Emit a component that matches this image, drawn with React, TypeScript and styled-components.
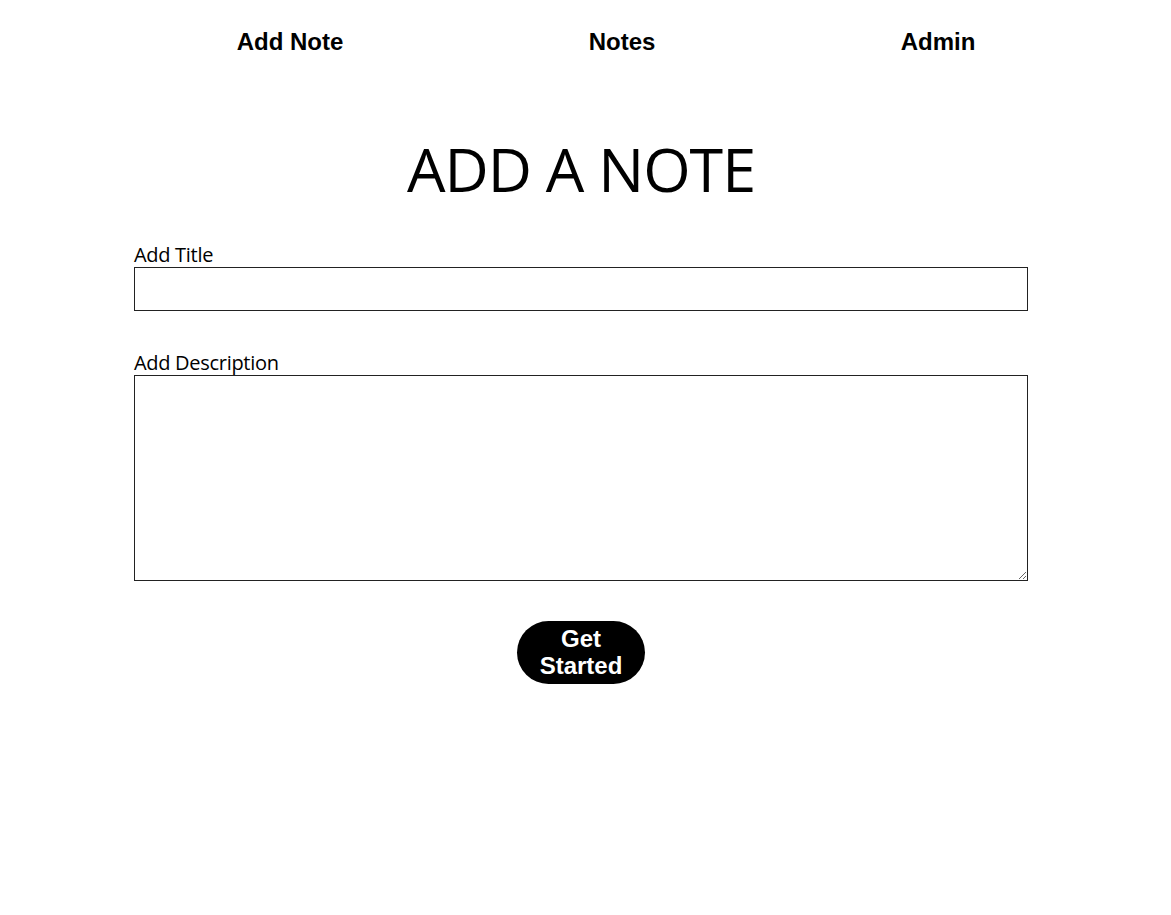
import React, { useState } from 'react';
import styled, { createGlobalStyle } from 'styled-components';

const GlobalStyle = createGlobalStyle`
  body {
    margin: 0;
    background: #fff;
    color: #000;
    font-family: "Open Sans", "Noto Sans", sans-serif;
  }
`;

const NavBar = styled.ul`
  list-style: none;
  display: flex;
  justify-content: space-around;
  margin: 0;
  padding: 28px 73px 0 114px;

  li {
    font-family: "Liberation Sans", Arial, sans-serif;
    font-weight: bold;
    font-size: 24px;
    cursor: pointer;
  }
`;

const Main = styled.main`
  width: 894px;
  margin-left: 134px;
  display: flex;
  flex-direction: column;
`;

const Heading = styled.h1`
  margin: 71px 0 0;
  text-align: center;
  font-family: "Open Sans", sans-serif;
  font-weight: 400;
  font-size: 61px;
  letter-spacing: -1px;
  line-height: 83px;
`;

const Label = styled.label<{ $gap: number }>`
  display: block;
  margin-top: ${(p) => p.$gap}px;
  font-size: 20px;
  line-height: 27px;
  padding-top: 1px;
  height: 26px;
  letter-spacing: -0.3px;
`;

const TitleInput = styled.input`
  box-sizing: border-box;
  width: 100%;
  height: 44px;
  border: 1px solid #222;
  margin: 0;
  padding: 0 8px;
  font-size: 18px;
  outline: none;
`;

const DescriptionInput = styled.textarea`
  box-sizing: border-box;
  width: 100%;
  height: 206px;
  border: 1px solid #222;
  margin: 0;
  padding: 8px;
  font-size: 18px;
  display: block;
  outline: none;
`;

const SubmitButton = styled.button`
  align-self: center;
  margin-top: 40px;
  width: 128px;
  height: 63px;
  border: none;
  border-radius: 32px;
  background: #000;
  color: #fff;
  font-family: "Liberation Sans", Arial, sans-serif;
  font-weight: bold;
  font-size: 24px;
  line-height: 27px;
  padding: 2px 20px 4px;
  cursor: pointer;
`;

const App: React.FC = () => {
  const [title, setTitle] = useState('');
  const [description, setDescription] = useState('');

  return (
    <div>
      <GlobalStyle />
      <NavBar>
        <li>Add Note</li>
        <li>Notes</li>
        <li>Admin</li>
      </NavBar>
      <Main>
        <Heading>ADD A NOTE</Heading>
        <Label $gap={30} htmlFor="title">Add Title</Label>
        <TitleInput id="title" value={title} onChange={(e) => setTitle(e.target.value)} />
        <Label $gap={37} htmlFor="description">Add Description</Label>
        <DescriptionInput
          id="description"
          value={description}
          onChange={(e) => setDescription(e.target.value)}
        />
        <SubmitButton>Get Started</SubmitButton>
      </Main>
    </div>
  );
};

export default App;
